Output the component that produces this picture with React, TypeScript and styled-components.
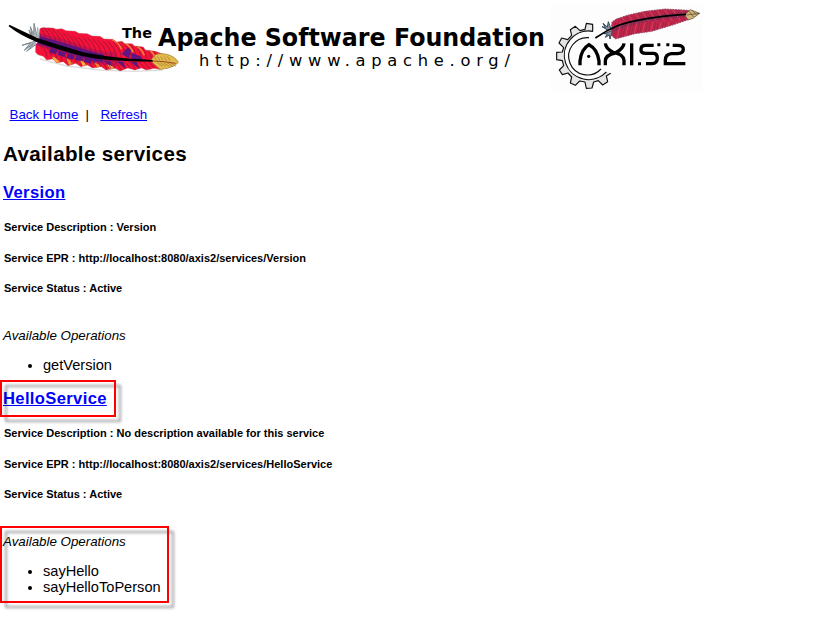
import React from "react";
import styled, { createGlobalStyle } from "styled-components";

const GlobalStyle = createGlobalStyle`
  html, body { margin: 0; background: #fff; }
  body { font-family: "Liberation Sans", Arial, sans-serif; color: #000; overflow: hidden; }
`;

const Page = styled.div`
  width: 824px;
  height: 627px;
  overflow: hidden;
  background: #fff;
`;

const Header = styled.header`
  display: flex;
  height: 105px;
  svg { display: block; flex: none; }
`;

const Link = styled.a`
  color: #0000ff;
  text-decoration: underline;
`;

const Nav = styled.nav`
  display: flex;
  height: 20px;
  padding-left: 9.5px;
  font-size: 13.33px;
  line-height: 20px;
`;

const Separator = styled.span`
  width: 22px;
  padding-left: 7px;
  box-sizing: border-box;
`;

const PageTitle = styled.h2`
  margin: 14px 0 13px;
  padding-left: 3px;
  font-size: 20.6px;
  line-height: 30px;
  letter-spacing: 0.34px;
`;

const Service = styled.section`
  padding-left: 3px;
`;

const ServiceTitle = styled.h3`
  position: relative;
  margin: 0 0 16px;
  font-size: 16.6px;
  line-height: 22px;
  letter-spacing: 0.35px;
`;

const Detail = styled.h5<{ $gap: number }>`
  margin: 0 0 ${(p) => p.$gap}px;
  padding-left: 1px;
  font-size: 11px;
  line-height: 14px;
`;

const Operations = styled.div`
  position: relative;
`;

const OperationsLabel = styled.i`
  display: block;
  font-size: 13.33px;
  line-height: 16px;
`;

const OperationList = styled.ul`
  margin: 13px 0 15px;
  padding-left: 40px;
  font-size: 14.6px;
  line-height: 16px;
`;

const Highlight = styled.span<{ $width: number; $height: number }>`
  position: absolute;
  top: -8px;
  left: -3px;
  box-sizing: border-box;
  width: ${(p) => p.$width}px;
  height: ${(p) => p.$height}px;
  border: 2px solid #f00;
  filter: drop-shadow(5px 5px 1.7px rgba(0, 0, 0, 0.38));
  pointer-events: none;
`;

const range = (from: number, to: number, step: number) => {
  const out: number[] = [];
  for (let v = from; v <= to; v += step) out.push(v);
  return out;
};

/* Height of the quill at a given x, as a polyline through its main points. */
const spinePoints = [[100, 87], [160, 104], [250, 131], [350, 147], [480, 153]];
const spineY = (x: number) => {
  for (let i = 1; i < spinePoints.length; i++) {
    const [x0, y0] = spinePoints[i - 1];
    const [x1, y1] = spinePoints[i];
    if (x <= x1) return y0 + ((x - x0) / (x1 - x0)) * (y1 - y0);
  }
  return 153;
};

function Feather() {
  const vane =
    "M118 92 L119 58 Q124 50 136 53 L160 54 L168 58 L186 56 L198 62 L226 64 L236 70 L262 71 L276 78 L300 79 L312 87 L338 88 L350 96 L366 94 L374 101 L396 101 L404 108 L430 111 L436 120 L466 124 L488 132 L480 178 L462 175 L440 180 L424 174 L404 180 L384 174 L360 183 L346 175 L318 180 L304 170 L278 174 L262 165 L242 170 L228 160 L204 167 L190 155 L170 158 L158 147 L140 150 L130 139 L114 134 L106 126 L107 104 Z";
  return (
    <g transform="translate(0 10) scale(0.33333)">
      <path d="M120 147 L200 168 L300 180 L400 184 L490 180" fill="none" stroke="#bbb" strokeWidth="4" opacity="0.5" />
      <clipPath id="vane"><path d={vane} /></clipPath>
      <g clipPath="url(#vane)">
        <rect x="100" y="40" width="400" height="150" fill="#f5123a" />
        <path d="M110 88 Q180 104 245 127 T350 146" fill="none" stroke="#a3105c" strokeWidth="40" opacity="0.5" />
        <path d="M116 90 Q180 108 245 128 Q280 140 310 146" fill="none" stroke="#5a158c" strokeWidth="25" />
        <path d="M150 120 Q210 142 285 156" fill="none" stroke="#5a158c" strokeWidth="14" strokeDasharray="22 5" />
        <path d="M365 132 L382 114 L394 118 L387 145 Z M394 128 L421 139 L430 149 L395 146 Z M310 152 L340 176 L330 152 Z M348 154 L378 176 L370 155 Z M392 156 L418 176 L410 155 Z" fill="#5a158c" />
        {range(112, 330, 42).map((x, i) => (
          <path key={x} d={`M${x} ${133 + i * 6} q18 4 26 20 l-13 3 z`} fill={i % 2 ? "#f7ae42" : "#f98035"} />
        ))}
        {range(335, 440, 34).map((x, i) => (
          <path key={x} d={`M${x} ${88 + i * 9} q22 9 30 30`} fill="none" stroke="#ff7a35" strokeWidth="5" />
        ))}
        {range(124, 492, 15).map((x) => {
          const y = spineY(x);
          return <path key={x} d={`M${x} ${y - 6} q-3 -27 -26 -46 M${x - 8} ${y + 5} q19 13 26 42`} fill="none" stroke="#8a1230" strokeWidth="2" />;
        })}
      </g>
      <path d={vane} fill="none" stroke="#b04a4a" strokeWidth="1" />
      <path d="M451 152 L466 134 Q480 128 500 133 Q525 139 535 157 Q527 169 502 175 L480 178 Z" fill="#e3bd4c" stroke="#9b722d" strokeWidth="2" />
      {range(470, 510, 10).map((x) => (
        <path key={x} d={`M${x} 152 l-8 -13 M${x} 157 l18 12`} stroke="#8a632c" strokeWidth="1.6" />
      ))}
      <path d="M455 153 Q490 153 527 160" fill="none" stroke="#a34328" strokeWidth="3" />
      <path d="M112 82 L102 40 L101 75 L91 50 L96 77 L87 60 L93 80 M110 92 L66 106 L91 99 L73 121 L100 101 L80 124 L107 104 M115 86 L113 52" fill="#aeb8be" stroke="#7b8991" strokeWidth="3" />
      <path d="M28 44 Q68 63 112 84 Q180 106 250 127 Q330 144 458 150 L458 155 Q320 155 246 138 Q172 118 108 95 Q60 76 26 49 Z" fill="#000" />
    </g>
  );
}

function ApacheLogo() {
  return (
    <svg width="548" height="100" viewBox="0 0 548 100">
      <Feather />
      <g fontFamily="'DejaVu Sans', Verdana, sans-serif" fill="#000">
        <text x="122" y="38" fontSize="13.5" fontWeight="bold" textLength="30" lengthAdjust="spacingAndGlyphs">The</text>
        <text x="158" y="46" fontSize="24" fontWeight="bold" textLength="387" lengthAdjust="spacingAndGlyphs">Apache Software Foundation</text>
        <text x="199" y="66" fontSize="16.3" letterSpacing="5.1" textLength="316">http://www.apache.org/</text>
      </g>
    </svg>
  );
}

function AxisLogo() {
  const vane = "M198 94 L201 66 L214 57 L250 45 L300 34 L360 27 L430 31 L445 42 L430 59 L380 76 L320 94 L270 101 L211 117 L199 105 Z";
  const teeth =
    "M143 94 V73 L124 70 L120 88 L105 92 L91 79 L76 89 L80 106 L68 119 L50 114 L42 129 L56 143 L52 156 L35 157 V179 L52 182 L56 197 L43 210 L52 224 L69 219 L80 231 L76 249 L91 256 L104 243 L120 246 L124 265 L141 264 L146 246 L160 242 L173 255 L188 245 L184 228 L197 220";
  return (
    <svg width="162" height="100" viewBox="9 0 486 300">
      <rect x="18" y="15" width="456" height="260" fill="#fdfdfd" />
      <path d={`${teeth} L184 216 A73 73 0 1 1 143 94 Z`} fill="#e6e6e6" />
      <path d={teeth} fill="none" stroke="#111" strokeWidth="3.5" strokeLinejoin="round" />
      <path d="M144 94 A73 73 0 1 0 184 216" fill="none" stroke="#111" strokeWidth="3.5" />
      <path d="M132 113 A56 56 0 1 0 168 207" fill="none" stroke="#111" strokeWidth="3.5" />
      <g fill="none" stroke="#000" strokeWidth="10">
        <path d="M105 196 V183 Q109 147 132 134 Q157 147 162 183 V196" />
        <path d="M181 130 Q182 145 204 157 Q235 162 237 181 V196 M237 130 Q236 145 211 159 Q181 165 181 183 V196" />
        <path d="M260 130 V196" />
        <path d="M326 136 H302 Q288 136 288 147 V151 Q288 160 302 160 H326 Q337 161 337 174 Q337 190 321 191 H303" />
        <path d="M383 136 H398 Q415 136 415 148 Q415 160 397 161 H379 Q361 164 361 180 V191 H421" />
      </g>
      <circle cx="131" cy="169" r="5" />
      <path d="M279 187 h9 v9 h-9z M337 130 h9 v9 h-9z M364 130 h9 v9 h-9z" />
      <clipPath id="smallVane"><path d={vane} /></clipPath>
      <g clipPath="url(#smallVane)">
        <rect x="190" y="20" width="260" height="100" fill="#c5234b" />
        <path d="M195 91 Q280 52 430 43" fill="none" stroke="#71315d" strokeWidth="14" opacity="0.6" />
        {range(200, 440, 8).map((x) => (
          <path key={x} d={`M${x} 30 l22 32 M${x} 115 l12 -48`} stroke={x % 3 ? "#672849" : "#c98156"} strokeWidth="2" opacity="0.6" />
        ))}
      </g>
      <path d={vane} fill="none" stroke="#925169" strokeWidth="3" strokeDasharray="5 3" />
      <path d="M419 44 L436 29 L464 40 L444 55 L429 60 Z" fill="#cfb779" stroke="#52472c" strokeWidth="2" />
      <path d="M424 45 L464 40 M432 34 L446 51 M442 32 L455 45" stroke="#514626" strokeWidth="2" />
      <path d="M198 87 L190 65 L187 81 L174 70 L181 83 L171 80 L189 91 M198 93 L177 101 L187 102 L181 112 L193 105 L195 117 L201 97" fill="#83919a" stroke="#374b59" strokeWidth="3" />
      <path d="M151 114 Q185 91 221 76 Q290 52 423 43" fill="none" stroke="#000" strokeWidth="5" />
    </svg>
  );
}

interface ServiceInfo {
  name: string;
  description: string;
  operations: string[];
  highlighted?: boolean;
}

const services: ServiceInfo[] = [
  { name: "Version", description: "Version", operations: ["getVersion"] },
  {
    name: "HelloService",
    description: "No description available for this service",
    operations: ["sayHello", "sayHelloToPerson"],
    highlighted: true,
  },
];

export default function App() {
  return (
    <Page>
      <GlobalStyle />
      <Header>
        <ApacheLogo />
        <AxisLogo />
      </Header>
      <Nav>
        <Link href="#">Back Home</Link>
        <Separator>|</Separator>
        <Link href="#">Refresh</Link>
      </Nav>
      <PageTitle>Available services</PageTitle>
      {services.map((s) => (
        <Service key={s.name}>
          <ServiceTitle>
            {s.highlighted && <Highlight $width={116} $height={37} />}
            <Link href="#">{s.name}</Link>
          </ServiceTitle>
          <Detail $gap={17}>Service Description : {s.description}</Detail>
          <Detail $gap={16}>Service EPR : http://localhost:8080/axis2/services/{s.name}</Detail>
          <Detail $gap={33}>Service Status : Active</Detail>
          <Operations>
            {s.highlighted && <Highlight $width={169} $height={77} />}
            <OperationsLabel>Available Operations</OperationsLabel>
            <OperationList>
              {s.operations.map((op) => (
                <li key={op}>{op}</li>
              ))}
            </OperationList>
          </Operations>
        </Service>
      ))}
    </Page>
  );
}
